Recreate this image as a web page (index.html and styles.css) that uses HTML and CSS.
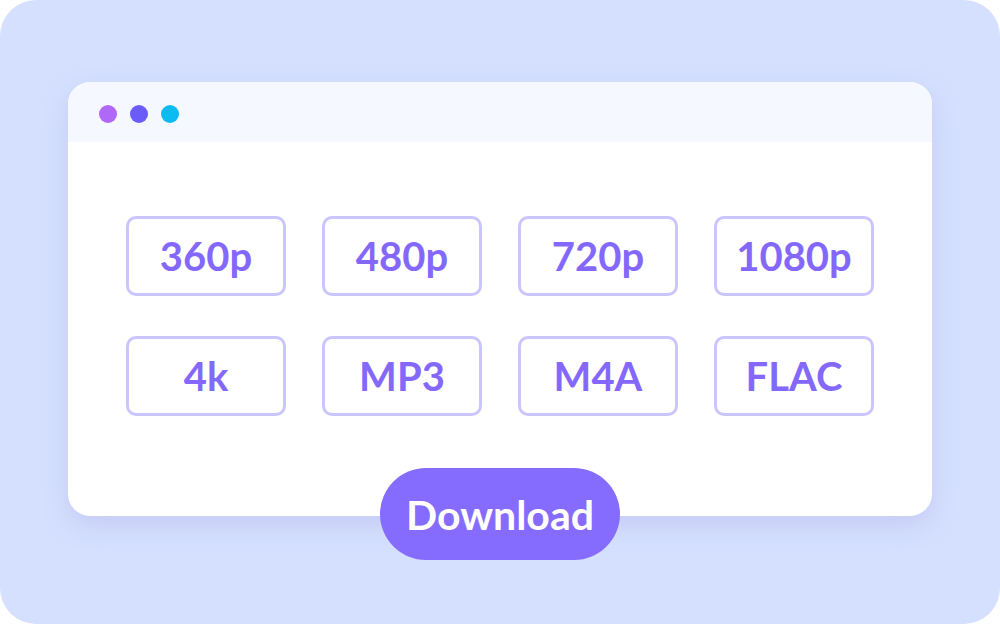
FILE: index.html
```html
<!DOCTYPE html>
<html lang="en">
<head>
    <meta charset="UTF-8">
    <meta name="viewport" content="width=device-width, initial-scale=1.0">
    <title>Download formats</title>
    <link rel="stylesheet" href="styles.css">
</head>
<body>

<div class="frame">
    <div class="window">
        <div class="window-bar">
            <span class="dot dot-purple"></span>
            <span class="dot dot-indigo"></span>
            <span class="dot dot-cyan"></span>
        </div>
        <div class="format-grid">
            <div class="format">360p</div>
            <div class="format">480p</div>
            <div class="format">720p</div>
            <div class="format">1080p</div>
            <div class="format">4k</div>
            <div class="format">MP3</div>
            <div class="format">M4A</div>
            <div class="format">FLAC</div>
        </div>
    </div>
    <button class="download-btn">Download</button>
</div>

</body>
</html>
```

FILE: styles.css
```css
body {
    margin: 0;
    background-color: #fff;
    font-family: 'Lato', 'Noto Sans', sans-serif;
}

.frame {
    width: 1000px;
    height: 624px;
    box-sizing: border-box;
    padding: 82px 68px 0;
    background-color: #d4e0fd;
    border-radius: 36px;
    overflow: hidden;
}

.window {
    height: 434px;
    background-color: #fff;
    border-radius: 22px;
    overflow: hidden;
    box-shadow: 0 10px 24px rgba(170, 160, 235, 0.3);
}

.window-bar {
    height: 60px;
    box-sizing: border-box;
    padding: 3px 0 0 31px;
    background-color: #f5f8fe;
    display: flex;
    align-items: center;
    gap: 13px;
}

.dot {
    width: 18px;
    height: 18px;
    border-radius: 50%;
}

.dot-purple { background-color: #b068f8; }
.dot-indigo { background-color: #6b5cf9; }
.dot-cyan { background-color: #0cbbf0; }

.format-grid {
    display: grid;
    grid-template-columns: repeat(4, 160px);
    grid-auto-rows: 80px;
    column-gap: 36px;
    row-gap: 40px;
    justify-content: center;
    padding-top: 74px;
}

.format {
    border: 3px solid #cbc5fd;
    border-radius: 10px;
    display: flex;
    align-items: center;
    justify-content: center;
    color: #8468fd;
    font-size: 40px;
    font-weight: 700;
}

.download-btn {
    display: block;
    margin: -48px auto 0;
    width: 240px;
    height: 92px;
    border: none;
    border-radius: 46px;
    background-color: #866bff;
    color: #fff;
    font-family: 'Lato', 'Noto Sans', sans-serif;
    font-size: 41px;
    font-weight: 700;
    position: relative;
}
```
